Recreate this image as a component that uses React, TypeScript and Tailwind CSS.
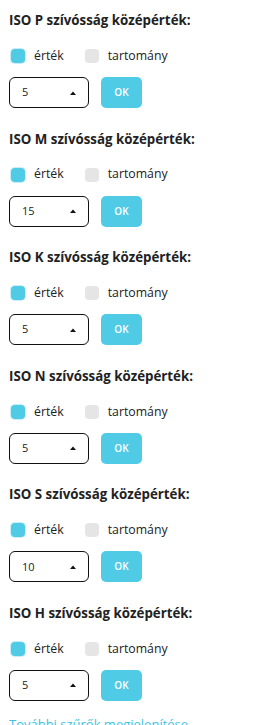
import React, { useState } from 'react';

interface Filter {
  code: string;
  value: string;
}

const filters: Filter[] = [
  { code: 'P', value: '5' },
  { code: 'M', value: '15' },
  { code: 'K', value: '5' },
  { code: 'N', value: '5' },
  { code: 'S', value: '10' },
  { code: 'H', value: '5' },
];

function Box({ checked }: { checked: boolean }) {
  return checked ? (
    <span className="w-[14px] h-[14px] rounded-[4px] bg-[#4fcbe6] ring-1 ring-[#c9eef7] shrink-0" />
  ) : (
    <span className="w-[14px] h-[14px] rounded-[4px] bg-[#e5e5e5] shrink-0" />
  );
}

function FilterBlock({ filter }: { filter: Filter }) {
  const [mode, setMode] = useState<'value' | 'range'>('value');

  return (
    <div className="h-[118.6px] pt-[10px]">
      <h3 className="h-5 leading-5 text-[13.3px] font-bold text-[#222]">
        ISO {filter.code} szívósság középérték:
      </h3>
      <div className="mt-[18px] h-4 flex items-center text-[12.3px] text-[#222]">
        <button className="flex items-center gap-[9px] pl-[2px]" onClick={() => setMode('value')}>
          <Box checked={mode === 'value'} />
          <span>érték</span>
        </button>
        <button className="flex items-center gap-[9px] ml-[21px]" onClick={() => setMode('range')}>
          <Box checked={mode === 'range'} />
          <span>tartomány</span>
        </button>
      </div>
      <div className="mt-[13px] flex items-center gap-3">
        <div className="w-[80px] h-[31px] border border-[#111] rounded-[6px] flex items-center justify-between pl-[12px] pr-[12px] text-[11px] text-[#222]">
          <span>{filter.value}</span>
          <svg width="6" height="4" viewBox="0 0 6 4">
            <path d="M0 4 L3 0.5 L6 4 Z" fill="#111" />
          </svg>
        </div>
        <button className="w-[41px] h-[31px] rounded-[5px] bg-[#4fcbe6] text-white text-[10px] font-semibold">
          OK
        </button>
      </div>
    </div>
  );
}

export default function App() {
  return (
    <div className="w-[260px] bg-white px-[9px] font-['Open_Sans',sans-serif]">
      {filters.map((f) => (
        <FilterBlock key={f.code} filter={f} />
      ))}
      <a className="block mt-[3px] text-[13px] text-[#3cc3e3]">További szűrők megjelenítése</a>
    </div>
  );
}
